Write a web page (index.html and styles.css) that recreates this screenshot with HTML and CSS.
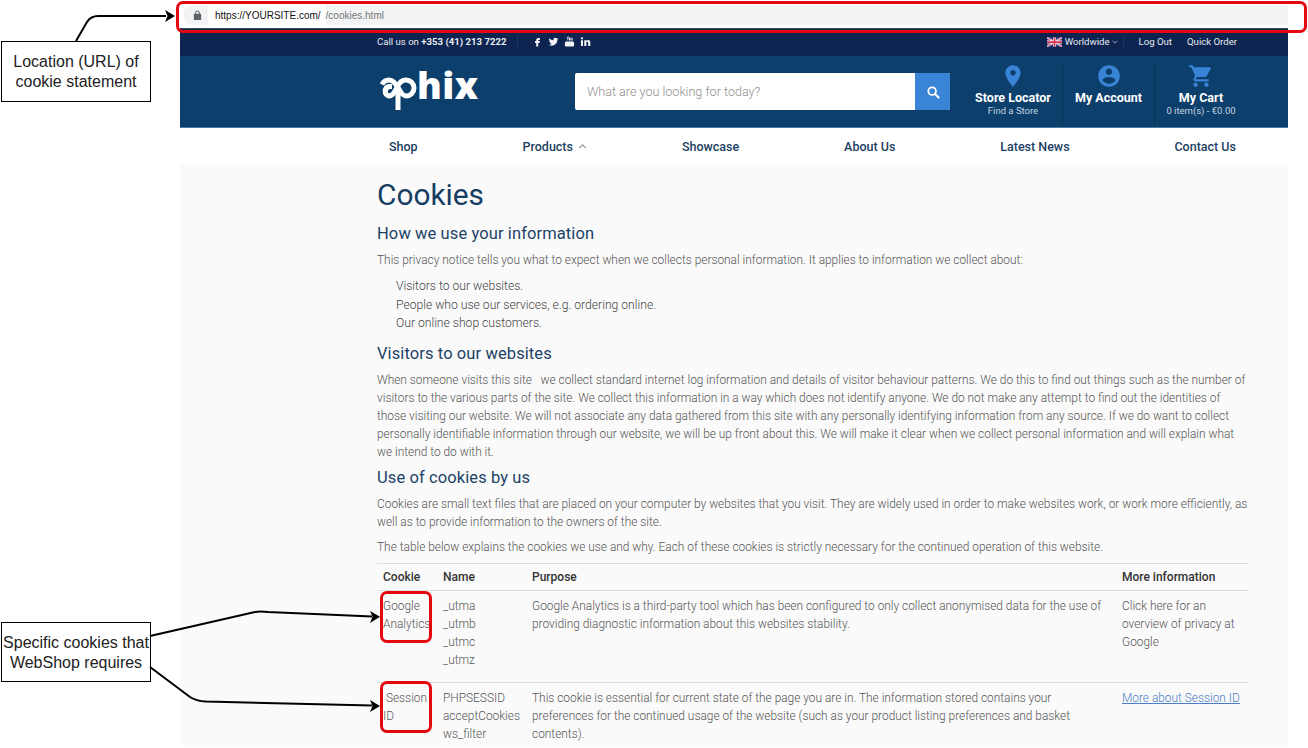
FILE: index.html
```html
<!DOCTYPE html>
<html lang="en">
<head>
  <meta charset="UTF-8" />
  <title>Cookies</title>
  <link rel="stylesheet" href="styles.css">
</head>
<body>

<div class="site">

  <div class="browser-bar">
    <div class="address">
      <svg class="lock" viewBox="0 0 24 24"><path d="M18 8h-1V6c0-2.76-2.24-5-5-5S7 3.24 7 6v2H6c-1.1 0-2 .9-2 2v10c0 1.1.9 2 2 2h12c1.1 0 2-.9 2-2V10c0-1.1-.9-2-2-2zM9 6c0-1.66 1.34-3 3-3s3 1.34 3 3v2H9V6z"/></svg>
      <span class="url-host">https://YOURSITE.com/</span>
      <span class="url-path">/cookies.html</span>
    </div>
  </div>

  <div class="topbar">
    <div class="topbar-left">
      <span>Call us on <b>+353 (41) 213 7222</b></span>
      <div class="socials">
        <svg viewBox="0 0 24 24"><path d="M14 8.5h3.200V4.200h-3.400c-3 0-4.600 1.900-4.600 4.600V11H6.600v4h2.600v8h4.400v-8h3.100l.5-4h-3.600V9.400c0-.6.2-.9.8-.9z"/></svg>
        <svg viewBox="0 0 24 24"><path d="M22.460 6c-.77.35-1.600.58-2.460.69.88-.53 1.560-1.370 1.880-2.380-.83.5-1.750.85-2.720 1.050C18.370 4.500 17.260 4 16 4c-2.350 0-4.270 1.920-4.270 4.290 0 .34.04.67.11.98C8.280 9.090 5.110 7.380 3 4.790c-.37.63-.58 1.370-.58 2.150 0 1.490.75 2.810 1.910 3.560-.71 0-1.370-.2-1.950-.5v.03c0 2.080 1.480 3.820 3.440 4.210a4.220 4.220 0 0 1-1.930.07 4.280 4.280 0 0 0 4 2.980 8.521 8.521 0 0 1-5.330 1.840c-.34 0-.68-.02-1.020-.06C3.440 20.290 5.700 21 8.120 21 16 21 20.330 14.460 20.330 8.790c0-.19 0-.37-.01-.56.84-.6 1.560-1.360 2.140-2.230z"/></svg>
        <svg viewBox="0 0 24 24"><path d="M7 1l1.300 3.600L9.600 1h1.500L9 6v4H7.600V6L5.500 1zM12.500 3.500c1.200 0 1.900.7 1.900 1.800v3c0 1.100-.7 1.800-1.900 1.800s-1.900-.7-1.900-1.800v-3c0-1.100.7-1.800 1.900-1.800zm3 .1h1.300v5c0 .4.500.4 1.100-.2V3.600h1.300V10h-1.300v-.7c-1.100 1.100-2.400 1.100-2.400-.4zM5 12h14c1.700 0 3 1.300 3 3v5c0 1.700-1.300 3-3 3H5c-1.700 0-3-1.300-3-3v-5c0-1.700 1.300-3 3-3z"/></svg>
        <svg viewBox="0 0 24 24"><path d="M2 9h4.600v13H2zM4.300 2.500a2.500 2.500 0 1 1 0 5 2.500 2.500 0 0 1 0-5zM9.300 9h4.400v1.800c.7-1.200 2.100-2.100 4-2.100 3.600 0 4.800 2.300 4.800 5.800V22h-4.600v-6.700c0-1.600-.3-3-1.900-3s-2.100 1.300-2.100 3V22H9.300z"/></svg>
      </div>
    </div>
    <div class="topbar-right">
      <span class="region">
        <svg class="flag" viewBox="0 0 60 36">
          <rect width="60" height="36" fill="#2a3f86"/>
          <path d="M0 0l60 36M60 0L0 36" stroke="#fff" stroke-width="7"/>
          <path d="M0 0l60 36M60 0L0 36" stroke="#d8324a" stroke-width="3"/>
          <path d="M30 0v36M0 18h60" stroke="#fff" stroke-width="12"/>
          <path d="M30 0v36M0 18h60" stroke="#d8324a" stroke-width="7"/>
        </svg>
        Worldwide
        <svg class="chev-small" viewBox="0 0 10 6"><path d="M1 1l4 4 4-4" fill="none" stroke="#cfd6e2" stroke-width="1.200"/></svg>
      </span>
      <span class="topbar-link first">Log Out</span>
      <span class="topbar-link">Quick Order</span>
    </div>
  </div>

  <header class="masthead">
    <div class="logo">
      <svg class="logo-mark" viewBox="0 0 39 38">
        <path d="M4 11.500A8 8 0 0 1 11 7C16 7 18 12 21 16C23 20 25 23 28 23A8 8 0 0 0 28 7C24 7 21 10 19 14C17 19 15 23 11 23A5.500 5 0 0 1 11 13.500L14 13.500"/>
        <path d="M20 17V37"/>
      </svg>
      <span class="logo-text">hix</span>
    </div>
    <div class="search">
      <span class="search-input">What are you looking for today?</span>
      <div class="search-btn">
        <svg viewBox="0 0 24 24"><circle cx="10.500" cy="10.500" r="6.500" fill="none" stroke="#fff" stroke-width="3.200"/><path d="M15.500 15.500l6 6" stroke="#fff" stroke-width="3.600" stroke-linecap="round"/></svg>
      </div>
    </div>
    <div class="head-links">
      <div class="head-link">
        <svg viewBox="0 0 24 24"><path d="M12 2C8.130 2 5 5.130 5 9c0 5.250 7 13 7 13s7-7.750 7-13c0-3.870-3.130-7-7-7zm0 9.500c-1.380 0-2.500-1.120-2.500-2.500s1.120-2.500 2.500-2.500 2.500 1.120 2.500 2.500-1.120 2.500-2.500 2.500z"/></svg>
        <strong>Store Locator</strong>
        <small>Find a Store</small>
      </div>
      <div class="head-link">
        <svg viewBox="0 0 24 24"><path d="M12 2C6.480 2 2 6.480 2 12s4.480 10 10 10 10-4.480 10-10S17.520 2 12 2zm0 3c1.660 0 3 1.340 3 3s-1.340 3-3 3-3-1.340-3-3 1.340-3 3-3zm0 14.200c-2.500 0-4.710-1.280-6-3.220.03-1.990 4-3.080 6-3.080 1.990 0 5.970 1.090 6 3.080-1.290 1.940-3.500 3.220-6 3.220z"/></svg>
        <strong>My Account</strong>
      </div>
      <div class="head-link">
        <svg viewBox="0 0 24 24"><path d="M7 18c-1.100 0-1.990.9-1.990 2S5.900 22 7 22s2-.9 2-2-.9-2-2-2zM1 2v2h2l3.600 7.590-1.350 2.450c-.16.28-.25.61-.25.96 0 1.100.9 2 2 2h12v-2H7.420c-.14 0-.25-.11-.25-.25l.03-.12.9-1.630h7.450c.75 0 1.410-.41 1.750-1.030l3.580-6.490c.08-.14.12-.31.12-.48 0-.55-.45-1-1-1H5.210l-.94-2H1zm16 16c-1.100 0-1.990.9-1.990 2s.89 2 1.990 2 2-.9 2-2-.9-2-2-2z"/></svg>
        <strong>My Cart</strong>
        <small>0 item(s) - €0.00</small>
      </div>
    </div>
  </header>

  <nav class="mainnav">
    <a>Shop</a>
    <a>Products <svg viewBox="0 0 10 6"><path d="M1 5l4-4 4 4" fill="none" stroke="#8d99a6" stroke-width="1.500"/></svg></a>
    <a>Showcase</a>
    <a>About Us</a>
    <a>Latest News</a>
    <a>Contact Us</a>
  </nav>

  <main class="content">
    <h1>Cookies</h1>

    <h2>How we use your information</h2>
    <p>This privacy notice tells you what to expect when we collects personal information. It applies to information we collect about:</p>
    <ul>
      <li>Visitors to our websites.</li>
      <li>People who use our services, e.g. ordering online.</li>
      <li>Our online shop customers.</li>
    </ul>

    <h2>Visitors to our websites</h2>
    <p>When someone visits this site &nbsp; we collect standard internet log information and details of visitor behaviour patterns. We do this to find out things such as the number of visitors to the various parts of the site. We collect this information in a way which does not identify anyone. We do not make any attempt to find out the identities of those visiting our website. We will not associate any data gathered from this site with any personally identifying information from any source. If we do want to collect personally identifiable information through our website, we will be up front about this. We will make it clear when we collect personal information and will explain what we intend to do with it.</p>

    <h2>Use of cookies by us</h2>
    <p>Cookies are small text files that are placed on your computer by websites that you visit. They are widely used in order to make websites work, or work more efficiently, as well as to provide information to the owners of the site.</p>
    <p>The table below explains the cookies we use and why. Each of these cookies is strictly necessary for the continued operation of this website.</p>

    <table class="cookie-table">
      <thead>
        <tr>
          <th class="col-cookie">Cookie</th>
          <th class="col-name">Name</th>
          <th class="col-purpose">Purpose</th>
          <th class="col-more">More information</th>
        </tr>
      </thead>
      <tbody>
        <tr>
          <td>Google Analytics</td>
          <td>_utma<br>_utmb<br>_utmc<br>_utmz</td>
          <td>Google Analytics is a third-party tool which has been configured to only collect anonymised data for the use of providing diagnostic information about this websites stability.</td>
          <td>Click here for an overview of privacy at Google</td>
        </tr>
        <tr>
          <td>&nbsp;Session ID</td>
          <td>PHPSESSID<br>acceptCookies<br>ws_filter</td>
          <td>This cookie is essential for current state of the page you are in. The information stored contains your preferences for the continued usage of the website (such as your product listing preferences and basket contents).</td>
          <td><a class="more-link">More about Session ID</a></td>
        </tr>
      </tbody>
    </table>
  </main>
</div>

<!-- annotations on top of the screenshot -->
<div class="callout callout-url">Location (URL) of cookie statement</div>
<div class="callout callout-cookies">Specific cookies that WebShop requires</div>

<div class="red-box red-url"></div>
<div class="red-box red-google"></div>
<div class="red-box red-session"></div>

<svg class="arrows" viewBox="0 0 1308 748">
  <g fill="none" stroke="#000" stroke-width="2">
    <path d="M76 41L87 22Q91 16 98 16L166 16"/>
    <path d="M150 636L255 612Q260 611 268 612L372 616.500"/>
    <path d="M150 667L190 697Q196 701 206 701.500L372 705.500"/>
  </g>
  <path d="M175 16L165 10L167.500 16L165 22z"/>
  <path d="M380 616.800L370 611L372.500 616.800L370 623z"/>
  <path d="M380 706L370 700L372.500 706L370 712z"/>
</svg>

</body>
</html>
```

FILE: styles.css
```css
* {
  box-sizing: border-box;
}

html, body {
  margin: 0;
  height: 748px;
  overflow: hidden;
}

body {
  position: relative;
  background: #fff;
  font-family: 'Roboto', sans-serif;
}

.site {
  width: 1108px;
  margin-left: 180px;
}

/* browser address bar */
.browser-bar {
  height: 29px;
  padding-top: 5px;
  background: #fff;
  border-bottom: 1px solid #3b4a5c;
}

.address {
  display: flex;
  align-items: center;
  height: 20px;
  margin-left: 3px;
  background: #f1f3f4;
  border-radius: 10px 0 0 10px;
  font-family: 'Liberation Sans', sans-serif;
  font-size: 10px;
}

.lock {
  width: 11px;
  height: 11px;
  margin-left: 9px;
  fill: #5f6368;
}

.url-host {
  display: flex;
  align-items: center;
  height: 20px;
  margin-left: 5px;
  padding: 0 5px 0 7px;
  background: #fff;
  color: #111;
}

.url-path {
  color: #777;
}

/* dark strip */
.topbar {
  display: flex;
  justify-content: space-between;
  align-items: center;
  height: 27px;
  padding: 0 51px 2px 197px;
  background: #0d2350;
  color: #e8ebf1;
  font-size: 9.600px;
}

.topbar-left,
.topbar-right,
.socials,
.region {
  display: flex;
  align-items: center;
}

.topbar b {
  font-weight: 700;
}

.socials {
  gap: 5px;
  height: 12px;
  margin-left: 11px;
  padding-left: 14px;
  border-left: 1px solid #1e3563;
}

.socials svg {
  width: 11px;
  height: 11px;
  fill: #f2f4f7;
}

.flag {
  width: 15px;
  height: 10px;
  margin-right: 3px;
}

.chev-small {
  width: 6px;
  height: 4px;
  margin-left: 2px;
}

.region {
  height: 12px;
  padding-right: 5px;
  border-right: 1px solid #1e3563;
}

.topbar-link {
  margin-left: 15px;
}

/* logo, search and shortcuts */
.masthead {
  display: flex;
  height: 72px;
  padding: 17px 0 0 198px;
  background: #0c3f6b;
  border-bottom: 1px solid #4a7ba6;
}

.logo {
  display: flex;
  align-items: flex-start;
  width: 197px;
  color: #fff;
}

.logo-mark {
  width: 39px;
  height: 38px;
  fill: none;
  stroke: #fff;
  stroke-width: 5;
}

.logo-text {
  font-family: 'Open Sans', sans-serif;
  font-size: 37px;
  font-weight: 800;
  line-height: 24px;
  letter-spacing: .5px;
}

.search {
  display: flex;
  width: 375px;
  height: 37px;
  background: #fff;
  border-radius: 2px;
  overflow: hidden;
}

.search-input {
  flex: 1;
  padding-left: 12px;
  color: #8f8f8f;
  font-size: 12.600px;
  font-weight: 300;
  line-height: 37px;
}

.search-btn {
  display: flex;
  align-items: center;
  justify-content: center;
  width: 35px;
  background: #3a84d8;
}

.search-btn svg {
  width: 14px;
  height: 14px;
}

.head-links {
  display: flex;
  height: 62px;
  margin: -10px 0 0 14px;
}

.head-link {
  display: flex;
  flex-direction: column;
  align-items: center;
  width: 92px;
  height: 63px;
  color: #fff;
  border-right: 1px solid #0a3358;
}

.head-link:first-child {
  width: 99px;
}

.head-link:last-child {
  border-right: 0;
}

.head-link svg {
  width: 26px;
  height: 26px;
  fill: #3a84d8;
}

.head-link strong {
  margin-top: 1px;
  font-size: 12.500px;
  font-weight: 700;
  line-height: 15px;
}

.head-link small {
  color: #c6d3e0;
  font-size: 9.500px;
  font-weight: 400;
  line-height: 12px;
}

/* main menu */
.mainnav {
  display: flex;
  justify-content: space-between;
  align-items: center;
  height: 36px;
  padding: 0 52px 0 209px;
  background: #fff;
  color: #1c3f63;
  font-size: 12.500px;
  font-weight: 500;
}

.mainnav svg {
  width: 9px;
  height: 5px;
  margin: 0 -10px 0 2px;
  vertical-align: 2px;
}

/* page body */
.content {
  height: 581px;
  padding: 14px 39px 0 197px;
  background: #fafafa;
  color: #555;
  font-size: 11.900px;
  font-weight: 300;
  line-height: 18px;
}

.content h1 {
  margin: 0;
  color: #163e63;
  font-size: 29.800px;
  font-weight: 400;
  line-height: 34px;
}

.content h2 {
  margin: 0 0 -1px;
  color: #1c4266;
  font-size: 16.500px;
  font-weight: 400;
  line-height: 22px;
  letter-spacing: .1px;
}

.content h1 + h2 {
  margin-top: 11px;
}

.content p {
  margin: 7px 0 0;
}

.content ul {
  margin: 8px 0 0;
  padding: 0 0 0 19px;
  color: #444;
  font-size: 12.150px;
  list-style: none;
  line-height: 18.500px;
}

.content ul + h2 {
  margin-top: 10px;
}

.content p + h2 {
  margin-top: 6px;
}

/* cookie table */
.cookie-table {
  width: 871px;
  margin-top: 7px;
  border-collapse: collapse;
  table-layout: fixed;
}

.cookie-table th {
  padding: 4px 6px;
  color: #333;
  font-size: 12px;
  font-weight: 500;
  text-align: left;
  border-top: 1px solid #ddd;
  border-bottom: 1px solid #ddd;
}

.cookie-table td {
  padding: 6px 6px 13px;
  vertical-align: top;
  border-bottom: 1px solid #ddd;
}

.col-cookie {
  width: 60px;
}

.col-name {
  width: 89px;
}

.col-more {
  width: 132px;
}

.more-link {
  color: #4a7cc7;
  text-decoration: underline;
}

/* annotations */
.callout {
  position: absolute;
  left: 1px;
  display: flex;
  align-items: center;
  justify-content: center;
  width: 150px;
  background: #fff;
  border: 1px solid #000;
  color: #222;
  font-family: 'Liberation Sans', sans-serif;
  font-size: 16px;
  line-height: 20px;
  text-align: center;
}

.callout-url {
  top: 41px;
  height: 61px;
}

.callout-cookies {
  top: 622px;
  height: 60px;
  padding-top: 1px;
}

.red-box {
  position: absolute;
  border: 3px solid #e4070f;
  border-radius: 7px;
}

.red-url {
  left: 176px;
  top: 1px;
  width: 1131px;
  height: 32px;
}

.red-google {
  left: 380px;
  top: 591px;
  width: 52px;
  height: 52px;
}

.red-session {
  left: 380px;
  top: 681px;
  width: 52px;
  height: 52px;
}

.arrows {
  position: absolute;
  left: 0;
  top: 0;
  width: 1308px;
  height: 748px;
  pointer-events: none;
}
```
